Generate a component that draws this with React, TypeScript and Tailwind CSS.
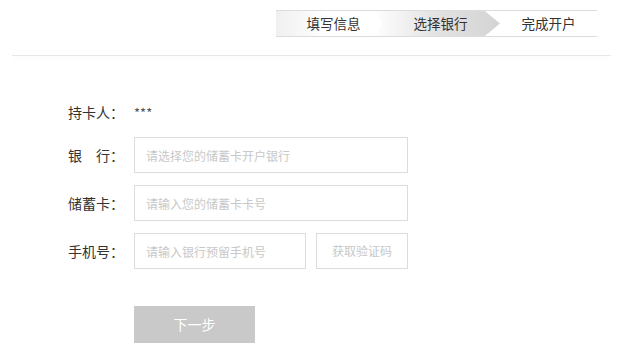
const font = "font-['Microsoft_YaHei','Noto_Sans_CJK_SC',sans-serif]";

function Steps() {
  return (
    <div className="flex h-[27px] w-[321px] items-stretch border-y border-[#dcdcdc] text-[13.5px] text-[#333]">
      <div className="flex w-[103px] items-center justify-center bg-gradient-to-r from-[#f0f0f0] via-white to-white pl-[12px]">
        填写信息
      </div>
      <div className="-mx-[6px] flex w-[127px] items-center justify-center bg-gradient-to-r from-white via-[#e2e2e2] to-[#d4d4d4] pl-[8px] [clip-path:polygon(0_0,88%_0,100%_50%,88%_100%,0_100%,8%_50%)]">
        选择银行
      </div>
      <div className="flex flex-1 items-center justify-center bg-white pl-[6px]">完成开户</div>
    </div>
  );
}

function Field({ label, children }: { label: React.ReactNode; children: React.ReactNode }) {
  return (
    <div className="flex items-center">
      <div className="w-[66px] text-[14px] text-[#333]">{label}</div>
      {children}
    </div>
  );
}

const input =
  "h-[36px] border border-[#dcdcdc] bg-white px-[11px] text-[12px] text-[#333] outline-none placeholder:text-[#c8c8c8]";

export default function App() {
  return (
    <div className={`${font} h-[352px] w-[623px] overflow-hidden bg-white`}>
      <div className="flex justify-end pr-[26px] pt-[10px]">
        <Steps />
      </div>
      <div className="mx-[12px] mt-[18px] h-px bg-[#e8e8e8] shadow-[0_2px_3px_rgba(0,0,0,0.04)]" />
      <div className="flex flex-col gap-[12px] pl-[68px] pt-[46px]">
        <Field label="持卡人：">
          <span className="text-[13px] text-[#555]">***</span>
        </Field>
        <div className="mt-[2px] flex flex-col gap-[12px]">
          <Field
            label={
              <span>
                银<span className="inline-block w-[14px]" />行：
              </span>
            }
          >
            <input className={`${input} w-[274px]`} placeholder="请选择您的储蓄卡开户银行" />
          </Field>
          <Field label="储蓄卡：">
            <input className={`${input} w-[274px]`} placeholder="请输入您的储蓄卡卡号" />
          </Field>
          <Field label="手机号：">
            <input className={`${input} w-[172px]`} placeholder="请输入银行预留手机号" />
            <button className="ml-[10px] h-[36px] w-[92px] border border-[#dcdcdc] bg-white text-[12px] text-[#c8c8c8]">
              获取验证码
            </button>
          </Field>
        </div>
        <div className="mt-[25px] pl-[66px]">
          <button className="h-[37px] w-[121px] bg-[#c9c9c9] text-[14px] text-white">下一步</button>
        </div>
      </div>
    </div>
  );
}
